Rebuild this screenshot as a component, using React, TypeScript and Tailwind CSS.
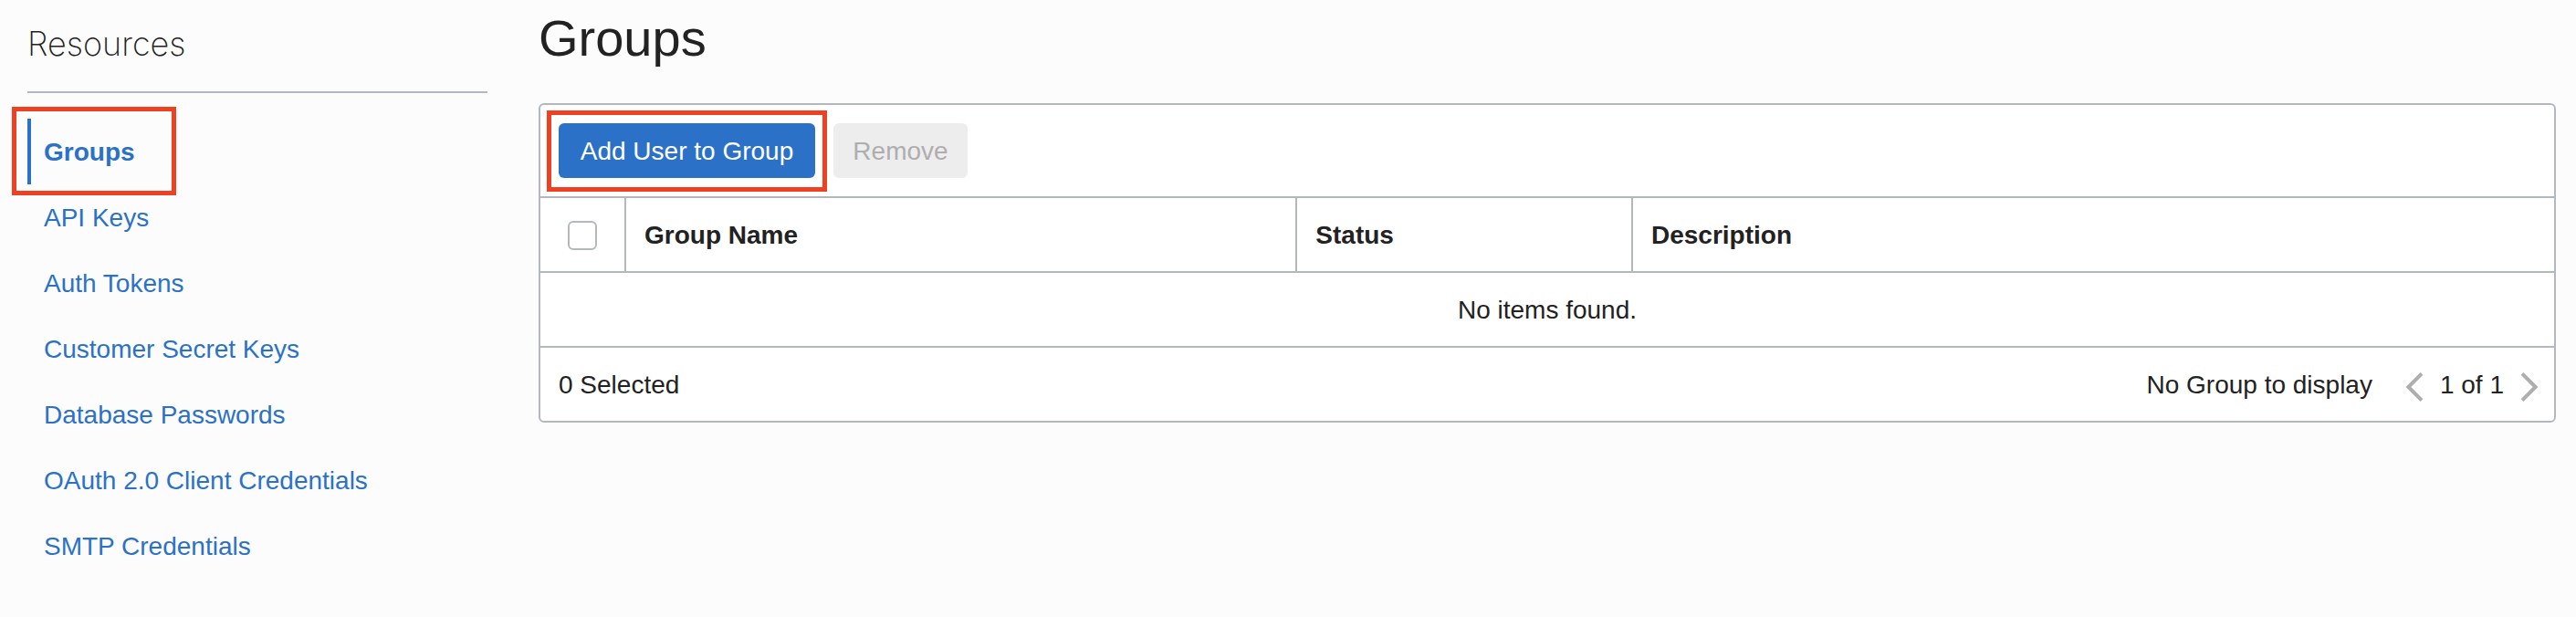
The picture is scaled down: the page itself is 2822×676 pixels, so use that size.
const resources = [
  'Groups',
  'API Keys',
  'Auth Tokens',
  'Customer Secret Keys',
  'Database Passwords',
  'OAuth 2.0 Client Credentials',
  'SMTP Credentials',
];

function Highlight({ className }: { className: string }) {
  return (
    <span
      aria-hidden="true"
      className={`pointer-events-none absolute border-5 border-[#ee4023] ${className}`}
    />
  );
}

function Sidebar() {
  return (
    <aside className="w-[504px] shrink-0">
      <h2 className="border-b-2 border-[#b3b8bf] pt-[26px] pb-[30px] font-[Inter,sans-serif] text-4xl leading-[44px] font-extralight">
        Resources
      </h2>
      <nav aria-label="Resources" className="mt-7">
        <ul>
          {resources.map((name, i) => (
            <li key={name} className="relative">
              <a
                href="#"
                aria-current={i === 0 ? 'page' : undefined}
                className={`block border-l-4 pt-0.5 pl-3.5 leading-[70px] text-[#2b71c7] ${
                  i === 0 ? 'border-[#2b71c7] font-bold' : 'border-transparent'
                }`}
              >
                {name}
              </a>
              {i === 0 && <Highlight className="-top-[13px] -left-[17px] h-[97px] w-[180px]" />}
            </li>
          ))}
        </ul>
      </nav>
    </aside>
  );
}

function Chevron({ direction }: { direction: 'left' | 'right' }) {
  return (
    <svg width="20" height="32" viewBox="0 0 20 32" fill="none" stroke="#aeaeae" strokeWidth="4">
      <path d={direction === 'left' ? 'M18 1.4 3.4 16 18 30.6' : 'M2 1.4 16.6 16 2 30.6'} />
    </svg>
  );
}

function GroupsPanel() {
  return (
    <div className="rounded-md border-2 border-[#b3b8bf] bg-white">
      <div className="flex gap-5 p-5">
        <div className="relative">
          <button type="button" className="h-[60px] w-[281px] rounded-md bg-[#2b71c7] pt-0.5 text-white">
            Add User to Group
          </button>
          <Highlight className="-inset-x-[13px] -top-3.5 -bottom-[15px]" />
        </div>
        <button type="button" disabled className="h-[60px] w-[147px] rounded-md bg-[#ededed] pt-0.5 text-[#aeaeae]">
          Remove
        </button>
      </div>
      <table className="w-full table-fixed border-separate border-spacing-0">
        <thead>
          <tr className="h-[82px] text-left">
            <th className="w-[94px] border-t-2 border-r-2 border-[#b3b8bf] p-0">
              <input
                type="checkbox"
                aria-label="Select all groups"
                className="mx-auto mt-0.5 block size-8 appearance-none rounded-md border-2 border-[#b3b8bf] bg-white"
              />
            </th>
            <th className="w-1/3 border-t-2 border-r-2 border-[#b3b8bf] px-5 pt-0.5 pb-0">Group Name</th>
            <th className="w-1/6 border-t-2 border-r-2 border-[#b3b8bf] px-5 pt-0.5 pb-0">Status</th>
            <th className="border-t-2 border-[#b3b8bf] px-5 pt-0.5 pb-0">Description</th>
          </tr>
        </thead>
        <tbody>
          <tr className="h-[82px]">
            <td colSpan={4} className="border-t-2 border-[#b3b8bf] px-0 pt-0.5 pb-0 text-center">
              No items found.
            </td>
          </tr>
        </tbody>
      </table>
      <div className="flex h-[82px] items-center justify-between border-t-2 border-[#b3b8bf] pt-0.5 pr-[17px] pl-5">
        <span>0 Selected</span>
        <div className="flex items-center">
          <span className="mr-9">No Group to display</span>
          <button type="button" disabled aria-label="Previous page" className="mt-1">
            <Chevron direction="left" />
          </button>
          <span className="mx-[18px]">1 of 1</span>
          <button type="button" disabled aria-label="Next page" className="mt-1">
            <Chevron direction="right" />
          </button>
        </div>
      </div>
    </div>
  );
}

export default function App() {
  return (
    <div className="flex min-h-screen gap-14 bg-[#fcfcfc] pr-[22px] pl-[30px] font-['Liberation_Sans',Arial,sans-serif] text-[28px] leading-9 text-[#222]">
      <Sidebar />
      <main className="min-w-0 flex-1">
        <h1 className="pt-2.5 pb-10 text-[56px] leading-[63px]">Groups</h1>
        <GroupsPanel />
      </main>
    </div>
  );
}
